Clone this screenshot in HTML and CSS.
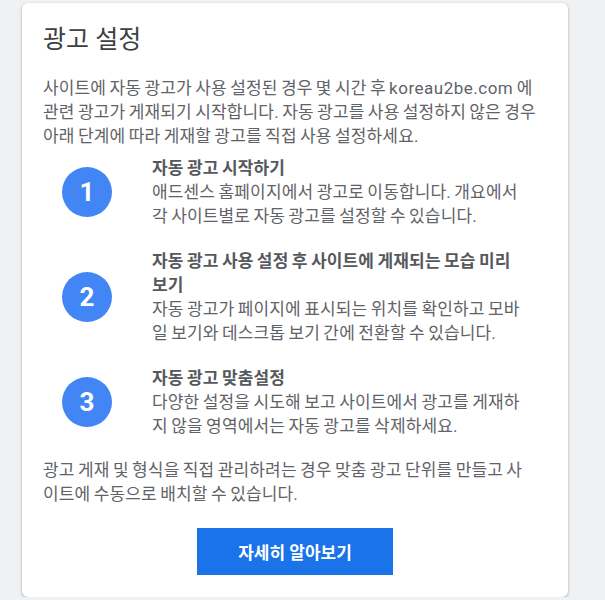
FILE: index.html
```html
<!DOCTYPE html>
<html lang="ko">
<head>
  <meta charset="UTF-8" />
  <meta name="viewport" content="width=device-width, initial-scale=1.0"/>
  <title>광고 설정</title>
  <link rel="stylesheet" href="styles.css">
</head>
<body>
  <div class="page">
    <div class="card">
      <h2>광고 설정</h2>

      <p class="intro">사이트에 자동 광고가 사용 설정된 경우 몇 시간 후 <span class="domain">koreau2be.com</span> 에 관련 광고가 게재되기 시작합니다. 자동 광고를 사용 설정하지 않은 경우 아래 단계에 따라 게재할 광고를 직접 사용 설정하세요.</p>

      <div class="steps">
        <div class="step">
          <div class="step-num">1</div>
          <div class="step-body">
            <div class="step-title">자동 광고 시작하기</div>
            <div class="step-text">애드센스 홈페이지에서 광고로 이동합니다. 개요에서 각 사이트별로 자동 광고를 설정할 수 있습니다.</div>
          </div>
        </div>

        <div class="step">
          <div class="step-num">2</div>
          <div class="step-body">
            <div class="step-title">자동 광고 사용 설정 후 사이트에 게재되는 모습 미리 보기</div>
            <div class="step-text">자동 광고가 페이지에 표시되는 위치를 확인하고 모바일 보기와 데스크톱 보기 간에 전환할 수 있습니다.</div>
          </div>
        </div>

        <div class="step">
          <div class="step-num">3</div>
          <div class="step-body">
            <div class="step-title">자동 광고 맞춤설정</div>
            <div class="step-text">다양한 설정을 시도해 보고 사이트에서 광고를 게재하지 않을 영역에서는 자동 광고를 삭제하세요.</div>
          </div>
        </div>
      </div>

      <p class="outro">광고 게재 및 형식을 직접 관리하려는 경우 맞춤 광고 단위를 만들고 사이트에 수동으로 배치할 수 있습니다.</p>

      <div class="actions">
        <a class="btn" href="#">자세히 알아보기</a>
      </div>
    </div>
  </div>
</body>
</html>
```

FILE: styles.css
```css
body {
  margin: 0;
  background: #eff1f3;
  font-family: Roboto, "Noto Sans CJK KR", sans-serif;
  color: #5f6368;
}

.page {
  padding: 3px 37px 0 22px;
}

.card {
  background: #fff;
  border-radius: 6px;
  box-shadow: 0 1px 3px rgba(60, 64, 67, 0.3), 0 1px 2px rgba(60, 64, 67, 0.15);
  padding: 21px 21px 22px;
  height: 594px;
  box-sizing: border-box;
}

h2 {
  margin: 0 0 20px;
  font-size: 25px;
  font-weight: 400;
  line-height: 32px;
  color: #3c4043;
}

.intro,
.outro,
.step-title,
.step-text {
  font-size: 17px;
  line-height: 24px;
  letter-spacing: 0.15px;
  word-spacing: -1px;
}

.intro,
.outro {
  margin: 0;
  padding-right: 10px;
}

.domain {
  letter-spacing: 0.5px;
}

.steps {
  display: flex;
  flex-direction: column;
  gap: 21px;
  margin: 8px 0 20px;
}

.step {
  display: grid;
  grid-template-columns: 88px 1fr;
  column-gap: 21px;
  align-items: center;
  padding-right: 26.8px;
}

.step-num {
  justify-self: center;
  width: 50px;
  height: 50px;
  border-radius: 50%;
  background: #4285f4;
  color: #fff;
  font-family: Roboto, sans-serif;
  font-weight: 700;
  font-size: 26px;
  display: flex;
  align-items: center;
  justify-content: center;
}

.step-title {
  font-weight: 700;
  color: #55595d;
}

.actions {
  display: flex;
  justify-content: center;
  margin-top: 22px;
}

.btn {
  display: flex;
  align-items: center;
  justify-content: center;
  width: 196px;
  height: 47px;
  background: #1a73e8;
  color: #fff;
  font-size: 17px;
  font-weight: 700;
  text-decoration: none;
}
```
